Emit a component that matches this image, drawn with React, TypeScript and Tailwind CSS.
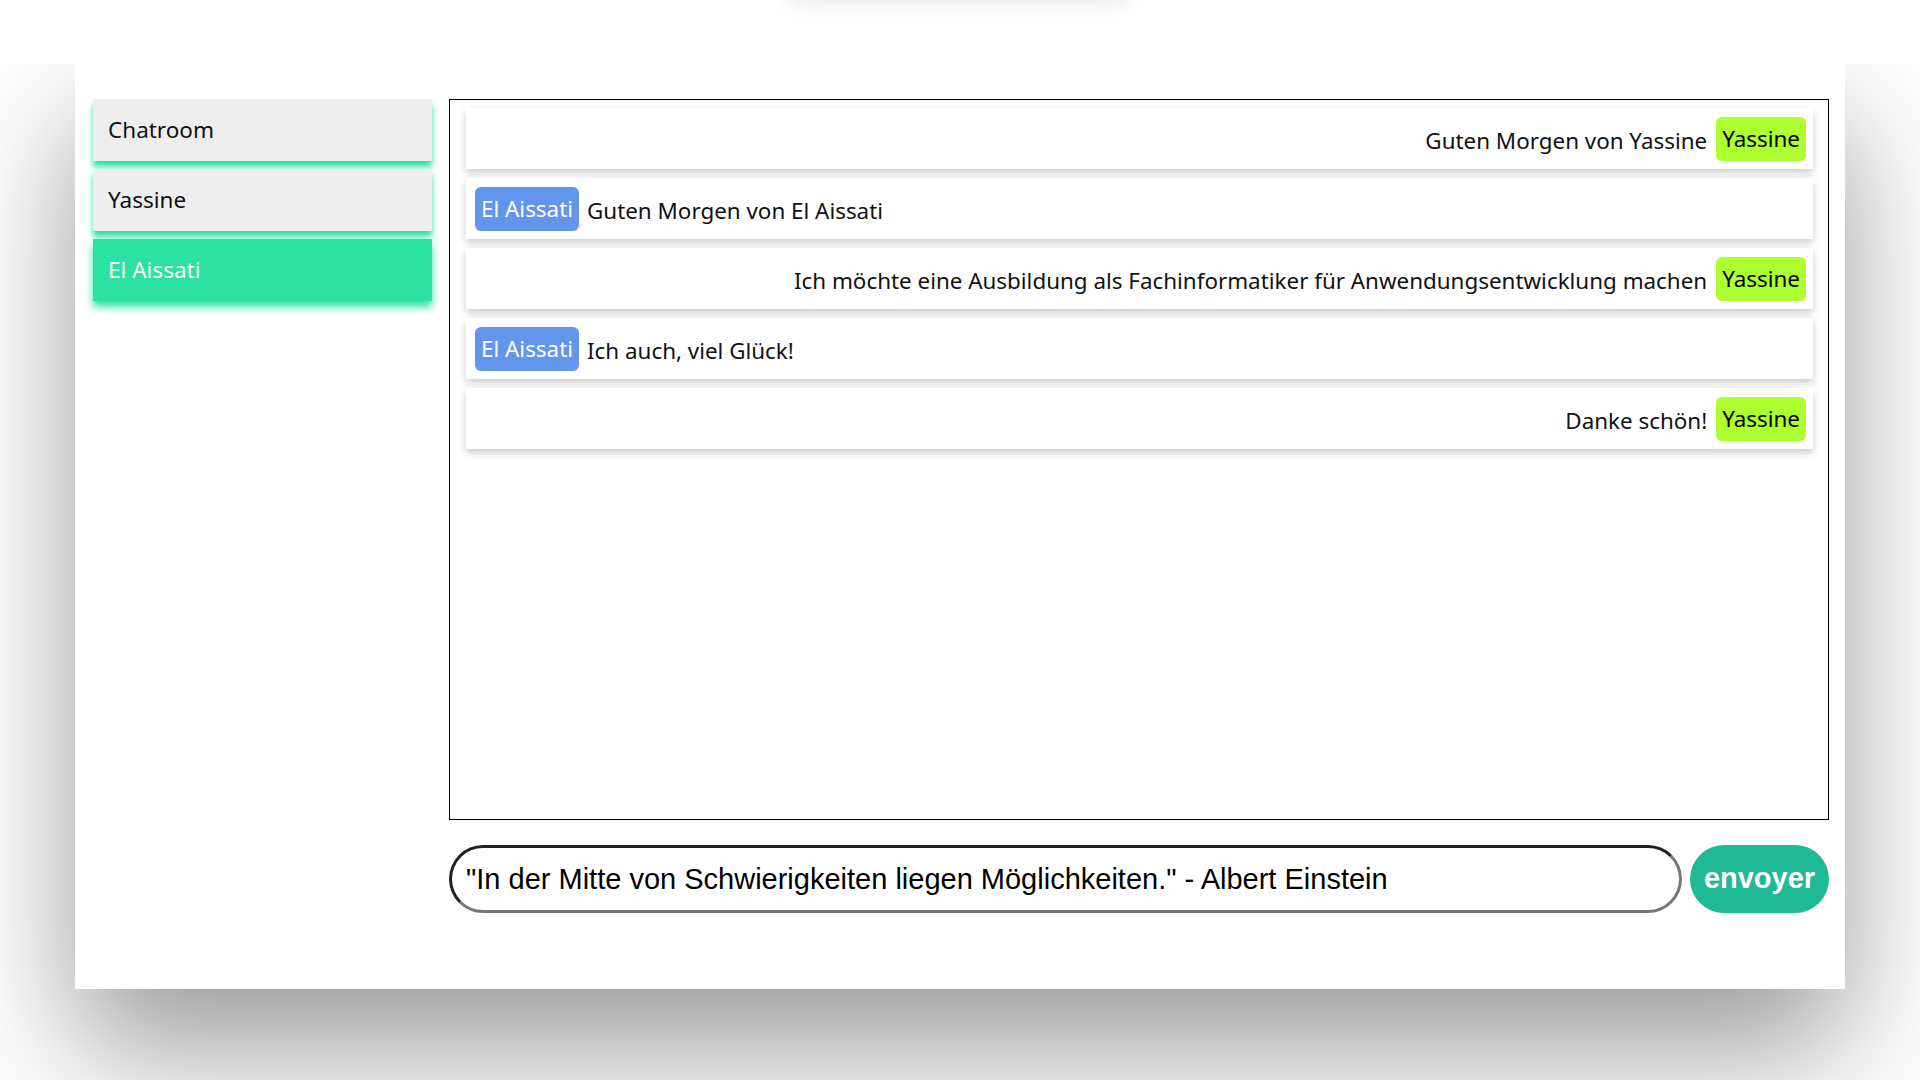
import React from "react";

type Msg = { from: "Yassine" | "El Aissati"; text: string };

const messages: Msg[] = [
  { from: "Yassine", text: "Guten Morgen von Yassine" },
  { from: "El Aissati", text: "Guten Morgen von El Aissati" },
  {
    from: "Yassine",
    text: "Ich möchte eine Ausbildung als Fachinformatiker für Anwendungsentwicklung machen",
  },
  { from: "El Aissati", text: "Ich auch, viel Glück!" },
  { from: "Yassine", text: "Danke schön!" },
];

const rooms = ["Chatroom", "Yassine", "El Aissati"];

export default function App() {
  return (
    <div className="relative min-h-screen w-full overflow-hidden bg-white font-['Noto_Sans',sans-serif]">
      <div className="relative z-10 h-[64px] w-full bg-white">
        <div className="absolute left-[790px] top-[-60px] h-[60px] w-[337px] bg-white shadow-[0_0_24px_rgba(0,0,0,0.12)]" />
      </div>
      <div className="pl-[75px]">
        <div className="flex w-[1770px] gap-[17px] bg-white pb-[76px] pl-[18px] pr-[16px] pt-[35px] shadow-[0_60px_120px_rgba(0,0,0,0.4)]">
          <div className="flex w-[339px] shrink-0 flex-col gap-[8px]">
            {rooms.map((r) => {
              const active = r === "El Aissati";
              return (
                <div
                  key={r}
                  className={
                    active
                      ? "flex h-[62px] items-center bg-[#2be2a3] pl-[15px] text-[22.5px] text-white shadow-[0_6px_8px_#2ce3a3]"
                      : "flex h-[62px] items-center bg-[#eeeeee] pl-[15px] text-[22.5px] text-[#111] shadow-[0_6px_6px_#2ce3a3]"
                  }
                >
                  {r}
                </div>
              );
            })}
          </div>
          <div className="flex flex-1 flex-col gap-[25px]">
            <div className="flex h-[721px] flex-col gap-[9px] border border-black pl-4 pr-[15px] pt-2">
              {messages.map((m, i) =>
                m.from === "Yassine" ? (
                  <div
                    key={i}
                    className="flex h-[61px] items-center justify-end gap-[9px] bg-white pr-[7px] text-[22.4px] text-[#111] shadow-[0_4px_8px_0_rgba(0,0,0,0.2)]"
                  >
                    <span className="pt-[5px]">{m.text}</span>
                    <span className="rounded-[6px] bg-[#adff2f] px-[6px] py-1 leading-[36px] text-black">
                      Yassine
                    </span>
                  </div>
                ) : (
                  <div
                    key={i}
                    className="flex h-[61px] items-center gap-[8px] bg-white pl-[9px] text-[22.4px] text-[#111] shadow-[0_4px_8px_0_rgba(0,0,0,0.2)]"
                  >
                    <span className="rounded-[6px] bg-[#6495ed] px-[6px] py-1 leading-[36px] text-white">
                      El Aissati
                    </span>
                    <span className="pt-[5px]">{m.text}</span>
                  </div>
                )
              )}
            </div>
            <div className="flex h-[68px] gap-[8px]">
              <input
                readOnly
                value={'"In der Mitte von Schwierigkeiten liegen Möglichkeiten." - Albert Einstein'}
                className="h-[68px] w-[1233px] rounded-full border-[3px] border-[#767676] bg-white pl-[14px] font-['Liberation_Sans',Arial,sans-serif] text-[29px] text-black outline-none [border-style:inset]"
              />
              <button className="h-[68px] flex-1 rounded-full bg-[#1fb993] font-['Liberation_Sans',Arial,sans-serif] text-[29px] font-bold text-white">
                envoyer
              </button>
            </div>
          </div>
        </div>
      </div>
    </div>
  );
}
